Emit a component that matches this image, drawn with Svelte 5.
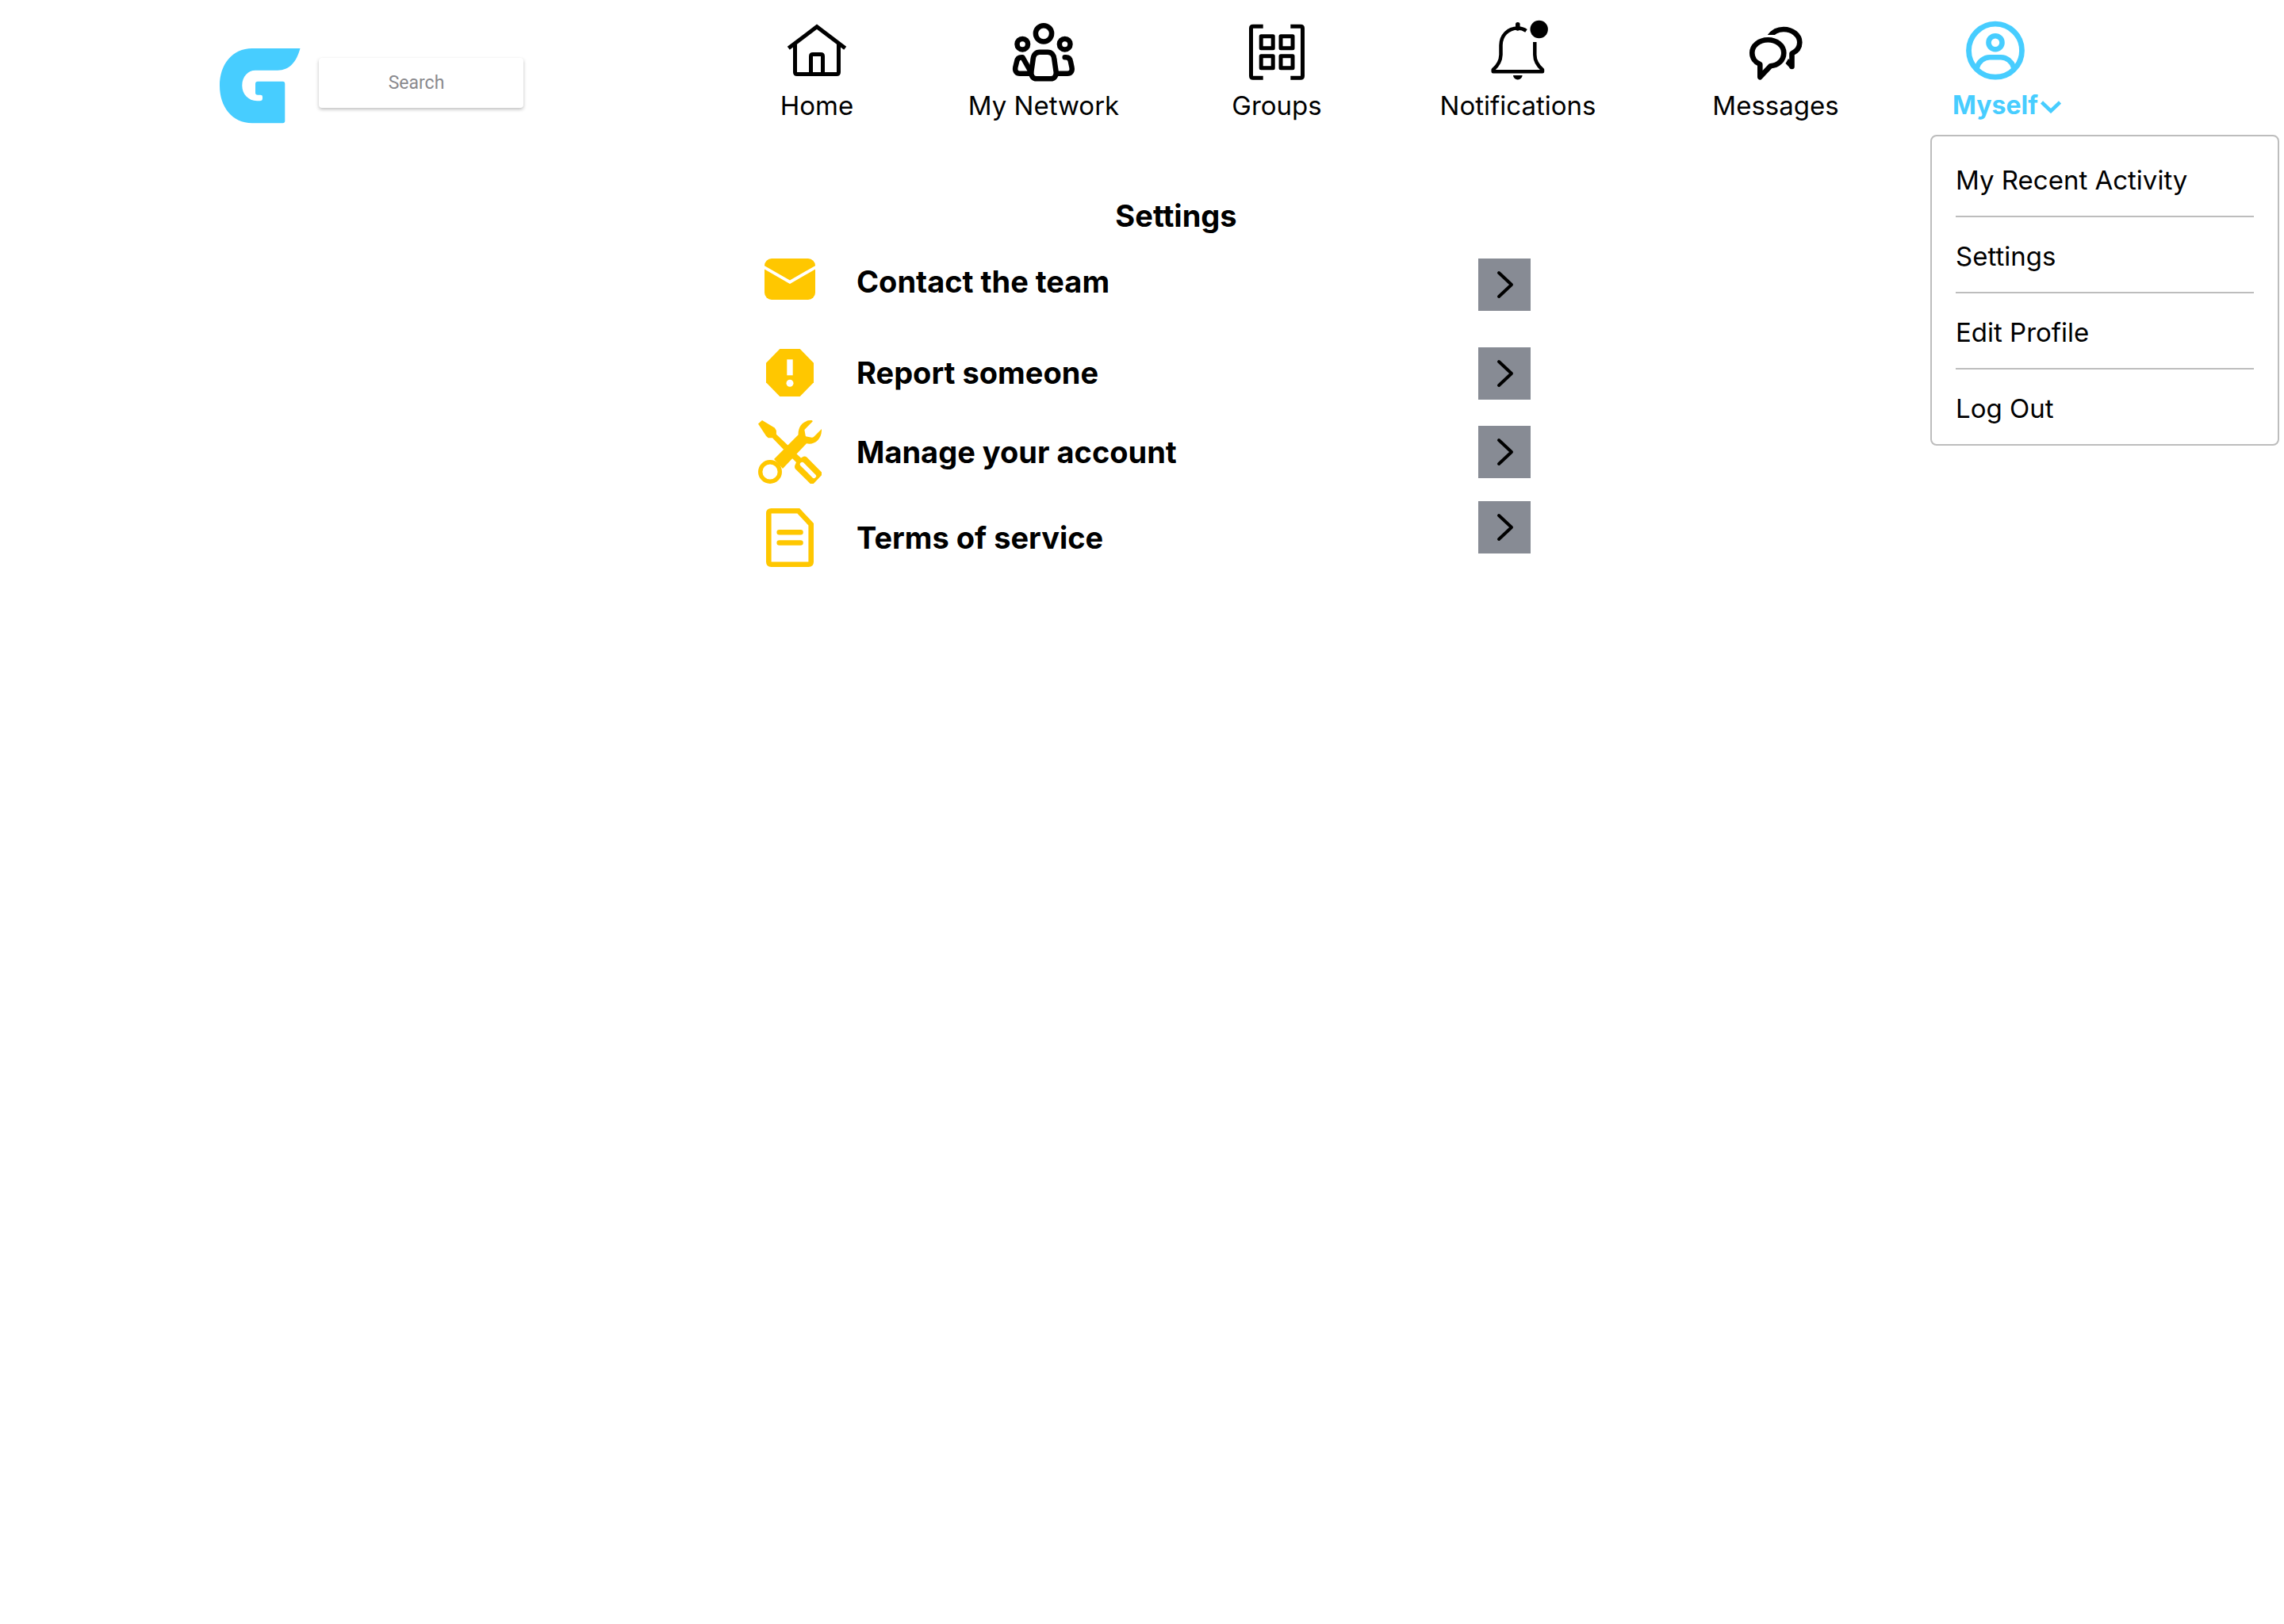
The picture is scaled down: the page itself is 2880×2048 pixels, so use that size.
<script lang="ts">
  const menu = ['My Recent Activity', 'Settings', 'Edit Profile', 'Log Out'];
</script>

{#snippet arrow(label: string)}
  <button class="open" type="button" aria-label={label}>
    <svg viewBox="0 0 66 66" aria-hidden="true">
      <path d="M26 18 L42 33 L26 48" fill="none" stroke="#000" stroke-width="4" stroke-linecap="round" stroke-linejoin="round" />
    </svg>
  </button>
{/snippet}

<header>
  <div class="brand">
    <a class="logo" href="#top" aria-label="Start page">
      <svg viewBox="0 0 102 95" aria-hidden="true">
        <path d="M101.500 0 H41 C16 0 0 20 0 47 C0 74 16 94.300 41 94.300 H79.500 Q82.300 94.300 82.300 91.500 V44.700 Q82.300 41.700 79.500 41.700 H48 Q45 41.700 45 44.700 V56 Q45 58.700 48 58.700 H51.500 Q54 58.700 54 61 V63 Q54 66.300 50.500 66.300 H47 C36 66 28.300 57.500 28.300 47 C28.300 35 36 27.700 45 27.700 H73 C88 27.700 97 17 101.500 0Z" />
      </svg>
    </a>
    <input class="search" type="text" placeholder="Search" aria-label="Search" />
  </div>

  <nav aria-label="Main">
    <a class="item" href="#home">
      <svg class="glyph" viewBox="0 0 80 80" aria-hidden="true">
        <g stroke-width="5">
          <path d="M4.300 36.700 L40 9.700 L75.700 36.700" />
          <path d="M12.500 32 V67 Q12.500 69.500 15 69.500 H65 Q67.500 69.500 67.500 67 V32" />
          <path d="M32.500 69 V47 Q32.500 44.500 35 44.500 H45 Q47.500 44.500 47.500 47 V69" />
        </g>
      </svg>
      <span class="label">Home</span>
    </a>
    <a class="item" href="#network">
      <svg class="glyph" viewBox="0 0 80 80" aria-hidden="true">
        <g stroke-width="6.5" stroke-linecap="round" stroke-linejoin="round">
          <circle cx="40" cy="18.300" r="10.100" />
          <circle cx="13.300" cy="31.700" r="6.800" />
          <circle cx="66.700" cy="31.700" r="6.800" />
          <path d="M35 41.700 H45 C50 41.700 53 45 53.400 51 L55.700 67 C56.200 72 53 75.300 49 75.300 H31 C27 75.300 23.800 72 24.300 67 L26.600 51 C27 45 30 41.700 35 41.700Z" />
          <path d="M24 67 L13.500 48.300 H12.500 C8.500 48.300 6.500 50.500 6 54 L4.300 61 C3.500 66 6 68.700 10 68.700 H23" />
          <path d="M66.700 48.300 H68 C72 48.300 73.500 50.500 74 54 L75.500 61 C76.500 66 74 68.700 70 68.700 H58" />
        </g>
      </svg>
      <span class="label">My Network</span>
    </a>
    <a class="item" href="#groups">
      <svg class="glyph" viewBox="0 0 80 80" aria-hidden="true">
        <g stroke-width="5">
          <path d="M22.700 9.200 H10 Q7.500 9.200 7.500 11.700 V71.700 Q7.500 74.200 10 74.200 H22.700" />
          <path d="M57.300 9.200 H70 Q72.500 9.200 72.500 11.700 V71.700 Q72.500 74.200 70 74.200 H57.300" />
          <g stroke-linejoin="round">
            <rect x="20.200" y="21.700" width="15" height="15" />
            <rect x="45" y="21.700" width="15" height="15" />
            <rect x="20.200" y="46.800" width="15" height="15" />
            <rect x="45" y="46.800" width="15" height="15" />
          </g>
        </g>
      </svg>
      <span class="label">Groups</span>
    </a>
    <a class="item" href="#notifications">
      <svg class="glyph" viewBox="0 0 80 80" aria-hidden="true">
        <path d="M39.800 6.800 V12" stroke-width="5.600" stroke-linecap="round" />
        <path d="M50.500 14.800 C47.500 12.700 44 11.500 40 11.500 C27 11.500 18.700 21 18.500 33 V45 C18.300 53 14.500 59 8.700 64 V66.300 H71 V64 C65.300 59 61.300 53 61.300 45 V29" stroke-width="4.500" stroke-linejoin="round" />
        <circle class="solid" cx="66.700" cy="13" r="11.200" />
        <path class="solid" d="M34 71 H45.600 A5.800 5.400 0 0 1 34 71Z" />
      </svg>
      <span class="label">Notifications</span>
    </a>
    <a class="item" href="#messages">
      <svg class="glyph" viewBox="0 0 80 80" aria-hidden="true">
        <defs>
          <clipPath id="behind"><path d="M0 0 H80 V80 H50 V40 L45 20 H0Z" /></clipPath>
        </defs>
        <g stroke-width="6.600" stroke-linejoin="round" stroke-linecap="round">
          <path d="M20.300 57 C14 54.500 10.300 49 10.300 42.700 C10.300 33.500 19.300 26.200 30.300 26.200 S50.300 33.500 50.300 42.700 S43 58.600 33.500 59.200 L20.300 73.300Z" />
          <path d="M32.500 22 C37 15.500 43.500 13 50 13 C61.500 13 70.300 20.500 70.300 29.500 C70.300 36 67 40.500 60.500 43.500 V60" clip-path="url(#behind)" />
        </g>
        <path class="solid" d="M56 50 L52.500 56 L58.500 62.300 L61 55Z" />
      </svg>
      <span class="label">Messages</span>
    </a>
    <a class="item current" href="#myself" aria-haspopup="true" aria-expanded="true">
      <svg class="glyph" viewBox="0 0 80 80" aria-hidden="true">
        <circle cx="40" cy="39.700" r="33.500" stroke-width="6.800" />
        <circle cx="40" cy="29.700" r="8.500" stroke-width="6.600" />
        <path d="M16.500 62 C19 53 26 48.200 33 48.200 H47 C54 48.200 61 53 63.500 62" stroke-width="6.600" />
      </svg>
      <span class="label">Myself</span>
      <svg class="caret" viewBox="0 0 26 16" aria-hidden="true">
        <path d="M1.500 2 L13 13 L24.500 2" stroke-width="4.500" />
      </svg>
    </a>
  </nav>

  <ul class="menu">
    {#each menu as entry}
      <li><a href="#menu">{entry}</a></li>
    {/each}
  </ul>
</header>

<main>
  <h1>Settings</h1>
  <ul class="options">
    <li class="contact">
      <a href="#contact">
        <svg viewBox="0 0 80 58" aria-hidden="true">
          <rect x="8" y="0" width="64" height="52" rx="9" />
          <path d="M5 9.600 L40 29.700 L75 9.600" fill="none" stroke="#fff" stroke-width="3.800" />
        </svg>
        <span>Contact the team</span>
      </a>
      {@render arrow('Contact the team')}
    </li>
    <li class="report">
      <a href="#report">
        <svg viewBox="0 -2 80 64" aria-hidden="true">
          <path d="M27.300 0 H52.700 L70 17.700 V42.300 L52.700 60 H27.300 L10 42.300 V17.700Z" />
          <rect x="36.300" y="13.300" width="7.400" height="20" fill="#fff" />
          <circle cx="40" cy="43.300" r="4.500" fill="#fff" />
        </svg>
        <span>Report someone</span>
      </a>
      {@render arrow('Report someone')}
    </li>
    <li class="manage">
      <a href="#account">
        <svg viewBox="0 0 80 80" aria-hidden="true">
          <path d="M0 4.500 L5 0 L20.800 9.500 L22.900 13 V17.700 L38 32 L32.200 37 L18 22.300 H12.700 L10.200 20Z" />
          <path d="M68.200 .200 C58 -1 50 7 50.600 18.300 L20 49 L31 61 L61 29.300 C71 31.500 80.500 24 80 11 L70.500 20.500 Q69 22 67.500 21.800 L61 20.500 Q60 20.300 59.700 19.500 L58.400 12 L68.700 1.500Z" />
          <circle cx="15" cy="65" r="12.300" fill="none" stroke="#ffc700" stroke-width="5.400" />
          <path d="M48 42 L54 47.500 L57 45.700 Q59.500 45 61.500 46.700 L80 65.500 V69.300 L69.800 80 H65.700 L47 61.500 Q45.500 59.500 46.300 57 L48 53 L42 47Z" />
          <path d="M55.500 55.500 L70.300 70.300" stroke="#fff" stroke-width="5.400" stroke-linecap="round" />
        </svg>
        <span>Manage your account</span>
      </a>
      {@render arrow('Manage your account')}
    </li>
    <li class="terms">
      <a href="#terms">
        <svg viewBox="0 0 80 74" aria-hidden="true">
          <g fill="none" stroke="#ffc700" stroke-width="6.600">
            <path d="M50.800 3.300 L66.700 20.200 V67.500 Q66.700 70.700 63.500 70.700 H16.500 Q13.300 70.700 13.300 67.500 V6.500 Q13.300 3.300 16.500 3.300Z" />
            <path d="M26.700 30.200 H53.500 M26.700 43.500 H53.500" stroke-linecap="round" />
          </g>
        </svg>
        <span>Terms of service</span>
      </a>
      {@render arrow('Terms of service')}
    </li>
  </ul>
</main>

<style>
  :global(body) {
    margin: 0;
    background: #fff;
    color: #000;
    font-family: Inter, 'Open Sans', sans-serif;
  }

  a {
    color: inherit;
    text-decoration: none;
  }

  ul {
    list-style: none;
    margin: 0;
    padding: 0;
  }

  header {
    position: relative;
    display: grid;
    grid-template-columns: 895fr 1985fr;
  }

  .brand {
    display: flex;
    align-items: flex-start;
    gap: 23px;
    padding: 61px 0 0 277px;
  }

  .logo svg {
    display: block;
    width: 102px;
    height: 95px;
    fill: #47cdff;
  }

  .search {
    box-sizing: border-box;
    width: 258px;
    height: 63px;
    margin-top: 12px;
    padding: 0 12px 0 0;
    border: 0;
    border-radius: 4px;
    background: #fff;
    box-shadow: 0 2px 4px rgba(0, 0, 0, 0.26);
    color: #000;
    font: 23px Roboto, sans-serif;
    text-align: center;
  }

  .search::placeholder {
    color: #8a8a8e;
    opacity: 1;
  }

  nav {
    display: grid;
    grid-template-columns: 270fr 302fr 286fr 322fr 328fr 226fr 251fr;
    padding-top: 24px;
  }

  .item {
    display: grid;
    grid-template-columns: 1fr auto 1fr;
    align-items: center;
    align-content: start;
    row-gap: 9px;
    fill: none;
    stroke: #000;
    font-size: 33px;
    line-height: 40px;
  }

  .glyph {
    grid-column: 1 / -1;
    justify-self: center;
    width: 80px;
    height: 80px;
  }

  .solid {
    fill: #000;
    stroke: none;
  }

  .label {
    grid-column: 2;
    white-space: nowrap;
  }

  .current {
    color: #47cdff;
    stroke: #47cdff;
    font-size: 32px;
    font-weight: 700;
  }

  .caret {
    width: 26px;
    height: 16px;
    margin: 4px 0 0 3px;
  }

  .menu {
    position: absolute;
    top: 170px;
    right: 6px;
    box-sizing: border-box;
    width: 440px;
    padding: 6px 30px 0;
    border: 2px solid #bdbdbd;
    border-radius: 8px;
    background: #fff;
    font-size: 33px;
    line-height: 90px;
  }

  .menu li + li {
    border-top: 2px solid #bdbdbd;
  }

  .menu a {
    display: block;
    padding-top: 4px;
  }

  main {
    max-width: 974px;
    margin: 0 auto;
    padding: 92px 0 0 6px;
  }

  h1 {
    margin: 0 0 30px;
    padding-left: 80px;
    font-size: 38px;
    line-height: 48px;
    text-align: center;
  }

  .options li {
    display: flex;
    align-items: flex-start;
    justify-content: space-between;
  }

  .options a {
    display: flex;
    align-items: center;
    gap: 44px;
    font-size: 38px;
    font-weight: 700;
    line-height: 48px;
  }

  .options a svg {
    width: 80px;
    fill: #ffc700;
  }

  .options .contact {
    padding-bottom: 46px;
  }

  .options .report {
    padding-bottom: 26px;
  }

  .options .manage {
    align-items: center;
    padding-bottom: 22px;
  }

  .options .terms a {
    padding-top: 9px;
  }

  .open {
    width: 66px;
    height: 66px;
    padding: 0;
    border: 0;
    background: #878b94;
  }

  .open svg {
    display: block;
  }
</style>
